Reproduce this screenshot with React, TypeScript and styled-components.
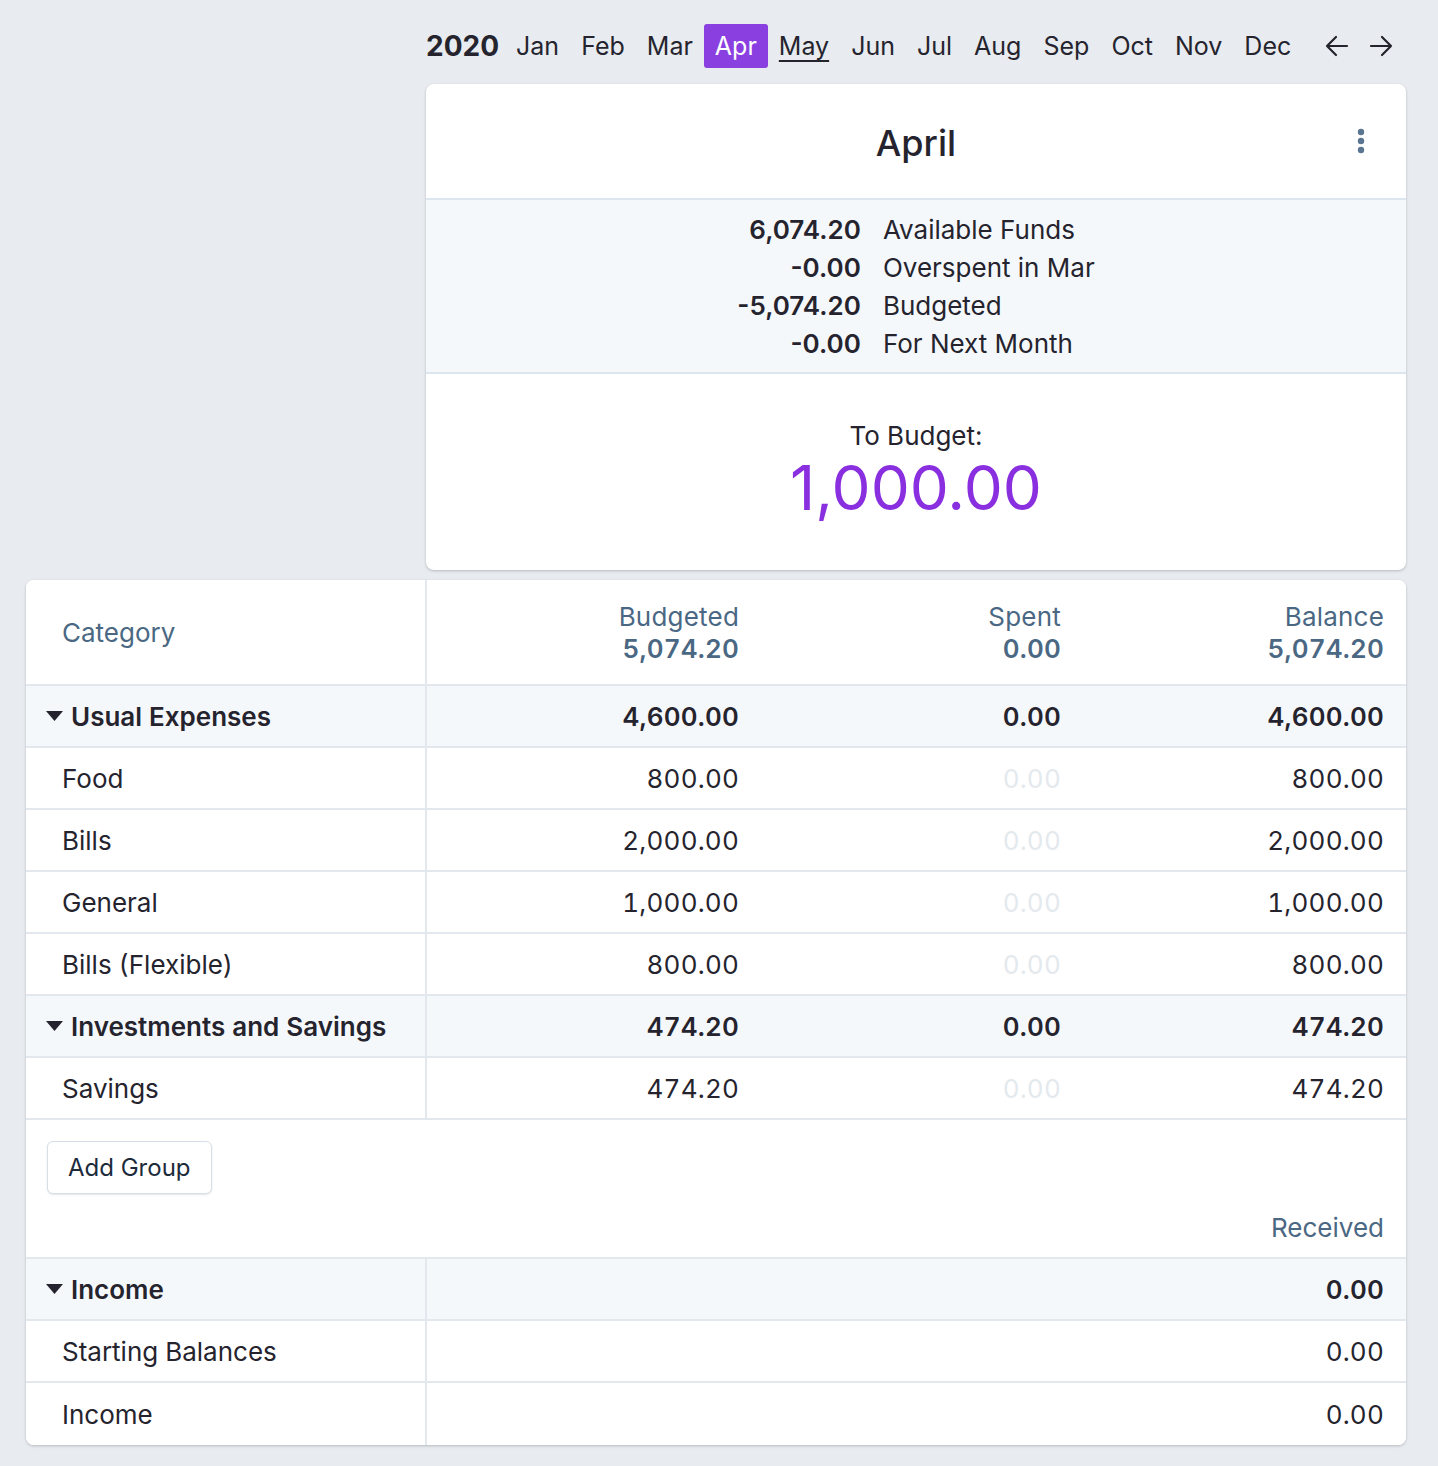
import React from "react";
import styled, { createGlobalStyle } from "styled-components";

const colors = {
  page: "#e8ecf0",
  card: "#ffffff",
  tint: "#f5f8fb",
  line: "#e3e8ee",
  text: "#25242e",
  header: "#4a6883",
  purple: "#8a3fe0",
  big: "#8a2fe0",
  faint: "#e4e9ee",
};

const GlobalStyle = createGlobalStyle`
  body {
    margin: 0;
    background: ${colors.page};
    font-family: Inter, "Noto Sans", sans-serif;
    color: ${colors.text};
  }
`;

const months = ["Jan", "Feb", "Mar", "Apr", "May", "Jun", "Jul", "Aug", "Sep", "Oct", "Nov", "Dec"];

const summary = [
  { value: "6,074.20", label: "Available Funds" },
  { value: "-0.00", label: "Overspent in Mar" },
  { value: "-5,074.20", label: "Budgeted" },
  { value: "-0.00", label: "For Next Month" },
];

type Row = { name: string; budgeted: string; spent: string; balance: string; group?: boolean };

const expenseRows: Row[] = [
  { name: "Usual Expenses", budgeted: "4,600.00", spent: "0.00", balance: "4,600.00", group: true },
  { name: "Food", budgeted: "800.00", spent: "0.00", balance: "800.00" },
  { name: "Bills", budgeted: "2,000.00", spent: "0.00", balance: "2,000.00" },
  { name: "General", budgeted: "1,000.00", spent: "0.00", balance: "1,000.00" },
  { name: "Bills (Flexible)", budgeted: "800.00", spent: "0.00", balance: "800.00" },
  { name: "Investments and Savings", budgeted: "474.20", spent: "0.00", balance: "474.20", group: true },
  { name: "Savings", budgeted: "474.20", spent: "0.00", balance: "474.20" },
];

const incomeRows = [
  { name: "Income", received: "0.00", group: true },
  { name: "Starting Balances", received: "0.00" },
  { name: "Income", received: "0.00" },
];

const Page = styled.div`
  padding: 24px 32px 20px 26px;
`;

const Top = styled.div`
  display: flex;
  flex-direction: column;
  margin-left: 400px;
  gap: 16px;
`;

const MonthNav = styled.div`
  display: flex;
  align-items: center;
  height: 44px;
  font-size: 25px;
`;

const Year = styled.span`
  font-weight: 700;
  font-size: 28px;
  margin-right: 6px;
`;

const Month = styled.span<{ $active?: boolean; $current?: boolean }>`
  display: flex;
  align-items: center;
  height: 44px;
  padding: 0 11px;
  border-radius: 3px;
  background: ${(p) => (p.$active ? colors.purple : "transparent")};
  color: ${(p) => (p.$active ? "#fff" : colors.text)};
  text-decoration: ${(p) => (p.$current ? "underline" : "none")};
  text-underline-offset: 5px;
  text-decoration-thickness: 2px;
`;

const Arrows = styled.div`
  display: flex;
  gap: 20px;
  margin-left: 23px;
  svg {
    display: block;
  }
`;

const Card = styled.div`
  background: ${colors.card};
  border-radius: 8px;
  box-shadow: 0 1px 3px rgba(0, 0, 0, 0.22);
  overflow: hidden;
`;

const CardHeader = styled.div`
  position: relative;
  height: 116px;
  padding-top: 4px;
  box-sizing: border-box;
  display: flex;
  align-items: center;
  justify-content: center;
  font-size: 36px;
  font-weight: 500;
  border-bottom: 2px solid #dde5ee;
`;

const MenuDots = styled.div`
  position: absolute;
  right: 41px;
  top: 44px;
  svg {
    display: block;
  }
`;

const Summary = styled.div`
  background: ${colors.tint};
  padding: 11px 0 9px;
  display: grid;
  grid-template-columns: auto auto;
  justify-content: center;
  column-gap: 22px;
  font-size: 26px;
  line-height: 38px;
  border-bottom: 2px solid #dde5ee;
`;

const SumValue = styled.div`
  text-align: right;
  font-weight: 600;
`;

const SumLabel = styled.div``;

const ToBudget = styled.div`
  height: 196px;
  display: flex;
  flex-direction: column;
  align-items: center;
  padding-top: 47px;
  box-sizing: border-box;
`;

const ToBudgetLabel = styled.div`
  font-size: 26px;
  line-height: 30px;
`;

const ToBudgetValue = styled.div`
  font-size: 62px;
  line-height: 74px;
  color: ${colors.big};
  font-weight: 400;
`;

const Table = styled(Card)`
  margin-top: 10px;
`;

const GridRow = styled.div<{ $group?: boolean }>`
  display: grid;
  grid-template-columns: 401px 334px 322px 1fr;
  height: 62px;
  border-bottom: 2px solid ${colors.line};
  background: ${(p) => (p.$group ? colors.tint : colors.card)};
  font-size: 26px;
  font-weight: ${(p) => (p.$group ? 600 : 400)};
  font-variant-numeric: tabular-nums;
  letter-spacing: 0.2px;
  box-sizing: border-box;
`;

const HeaderRow = styled(GridRow)`
  height: 106px;
  color: ${colors.header};
`;

const NameCell = styled.div<{ $group?: boolean }>`
  display: flex;
  align-items: center;
  padding-left: ${(p) => (p.$group ? "20px" : "36px")};
  gap: 8px;
  letter-spacing: 0;
  border-right: 2px solid ${colors.line};
`;

const NumCell = styled.div<{ $faint?: boolean }>`
  display: flex;
  align-items: center;
  justify-content: flex-end;
  padding-right: 22px;
  color: ${(p) => (p.$faint ? colors.faint : "inherit")};
`;

const HeadCell = styled.div`
  display: flex;
  flex-direction: column;
  align-items: flex-end;
  justify-content: center;
  padding-right: 22px;
  line-height: 32px;
  padding-top: 2px;
  strong {
    font-weight: 600;
  }
`;

const WideRow = styled(GridRow)`
  grid-template-columns: 401px 1fr;
`;

const Footer = styled.div`
  height: 139px;
  border-bottom: 2px solid ${colors.line};
  display: flex;
  flex-direction: column;
  justify-content: space-between;
  padding: 21px 22px 14px 21px;
  box-sizing: border-box;
`;

const AddGroup = styled.button`
  align-self: flex-start;
  height: 53px;
  padding: 0 20px;
  font: inherit;
  font-size: 24px;
  color: #1c2a3c;
  background: #fff;
  border: 1.5px solid #d6dfe8;
  border-radius: 6px;
  box-shadow: 0 1px 2px rgba(0, 0, 0, 0.1);
`;

const Received = styled.div`
  align-self: flex-end;
  font-size: 26px;
  color: ${colors.header};
`;

const Caret = () => (
  <svg width="17" height="10" viewBox="0 0 17 10">
    <path d="M0 0 H17 L8.5 10 Z" fill={colors.text} />
  </svg>
);

const Arrow = ({ dir }: { dir: "left" | "right" }) => (
  <svg width="24" height="22" viewBox="0 0 24 22" fill="none" stroke={colors.text} strokeWidth="2.2" strokeLinecap="round" strokeLinejoin="round">
    {dir === "left" ? <path d="M22 11 H2 M11 2 L2 11 L11 20" /> : <path d="M2 11 H22 M13 2 L22 11 L13 20" />}
  </svg>
);

const Dots = () => (
  <svg width="8" height="27" viewBox="0 0 8 27">
    <circle cx="4" cy="4" r="3.2" fill="#5a7590" />
    <circle cx="4" cy="13" r="3.2" fill="#5a7590" />
    <circle cx="4" cy="22" r="3.2" fill="#5a7590" />
  </svg>
);

export default function App() {
  return (
    <Page>
      <GlobalStyle />
      <Top>
        <MonthNav>
          <Year>2020</Year>
          {months.map((m) => (
            <Month key={m} $active={m === "Apr"} $current={m === "May"}>
              {m}
            </Month>
          ))}
          <Arrows>
            <Arrow dir="left" />
            <Arrow dir="right" />
          </Arrows>
        </MonthNav>
        <Card>
          <CardHeader>
            April
            <MenuDots>
              <Dots />
            </MenuDots>
          </CardHeader>
          <Summary>
            {summary.map((s) => (
              <React.Fragment key={s.label}>
                <SumValue>{s.value}</SumValue>
                <SumLabel>{s.label}</SumLabel>
              </React.Fragment>
            ))}
          </Summary>
          <ToBudget>
            <ToBudgetLabel>To Budget:</ToBudgetLabel>
            <ToBudgetValue>1,000.00</ToBudgetValue>
          </ToBudget>
        </Card>
      </Top>

      <Table>
        <HeaderRow>
          <NameCell>Category</NameCell>
          <HeadCell>
            <span>Budgeted</span>
            <strong>5,074.20</strong>
          </HeadCell>
          <HeadCell>
            <span>Spent</span>
            <strong>0.00</strong>
          </HeadCell>
          <HeadCell>
            <span>Balance</span>
            <strong>5,074.20</strong>
          </HeadCell>
        </HeaderRow>
        {expenseRows.map((r) => (
          <GridRow key={r.name} $group={r.group}>
            <NameCell $group={r.group}>
              {r.group && <Caret />}
              {r.name}
            </NameCell>
            <NumCell>{r.budgeted}</NumCell>
            <NumCell $faint={!r.group}>{r.spent}</NumCell>
            <NumCell>{r.balance}</NumCell>
          </GridRow>
        ))}
        <Footer>
          <AddGroup>Add Group</AddGroup>
          <Received>Received</Received>
        </Footer>
        {incomeRows.map((r, i) => (
          <WideRow key={i} $group={r.group} style={i === incomeRows.length - 1 ? { borderBottom: "none" } : undefined}>
            <NameCell $group={r.group}>
              {r.group && <Caret />}
              {r.name}
            </NameCell>
            <NumCell>{r.received}</NumCell>
          </WideRow>
        ))}
      </Table>
    </Page>
  );
}
